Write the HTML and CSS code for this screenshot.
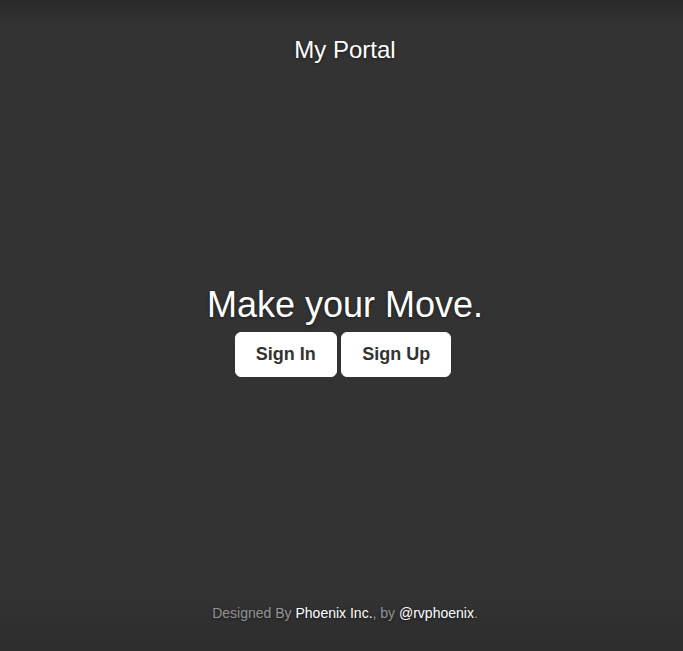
FILE: index.html
```html
<!DOCTYPE html>
<html lang="en">
<head>
    <meta charset="UTF-8">
    <meta name="viewport" content="width=device-width, initial-scale=1.0">
    <title>My Portal</title>
    <link rel="stylesheet" href="styles.css">
</head>
<body>
    <div class="site-wrapper">
        <header class="masthead">
            <h3 class="masthead-brand">My Portal</h3>
        </header>

        <main class="cover">
            <h1 class="cover-heading">Make your Move.</h1>
            <div class="actions">
                <a href="#" class="btn">Sign In</a>
                <a href="#" class="btn">Sign Up</a>
            </div>
        </main>

        <footer class="mastfoot">
            <p>Designed By <a href="#">Phoenix Inc.</a>, by <a href="#">@rvphoenix</a>.</p>
        </footer>
    </div>
</body>
</html>
```

FILE: styles.css
```css
html,
body {
    height: 100%;
    margin: 0;
}
body {
    font-family: "Liberation Sans", Arial, sans-serif;
    color: #fff;
    background-color: #333;
    background-image: linear-gradient(to bottom, #292929 0, #333 24px, #333 calc(100% - 60px), #2d2d2d 100%);
    text-shadow: 0 1px 3px rgba(0, 0, 0, .5);
}
.site-wrapper {
    height: 100%;
    display: flex;
    flex-direction: column;
    padding-left: 7px;
    box-sizing: border-box;
    text-align: center;
}
.masthead {
    padding-top: 37px;
}
.masthead-brand {
    margin: 0;
    font-size: 24px;
    font-weight: normal;
    line-height: 1.1;
}
.cover {
    flex: 1;
    display: flex;
    flex-direction: column;
    justify-content: center;
    padding-bottom: 4px;
}
.cover-heading {
    margin: 0 0 8px;
    font-size: 36px;
    font-weight: normal;
    line-height: 1.1;
}
.actions {
    padding-right: 4px;
}
.btn {
    display: inline-block;
    padding: 10px 20px;
    font-size: 18px;
    font-weight: bold;
    line-height: 23px;
    color: #333;
    text-decoration: none;
    text-shadow: none;
    background-color: #fff;
    border: 1px solid #fff;
    border-radius: 6px;
}
.mastfoot {
    padding-bottom: 28px;
    color: rgba(255, 255, 255, .5);
    font-size: 14px;
    line-height: 20px;
}
.mastfoot p {
    margin: 0;
}
.mastfoot a {
    color: #fff;
    text-decoration: none;
}
```
